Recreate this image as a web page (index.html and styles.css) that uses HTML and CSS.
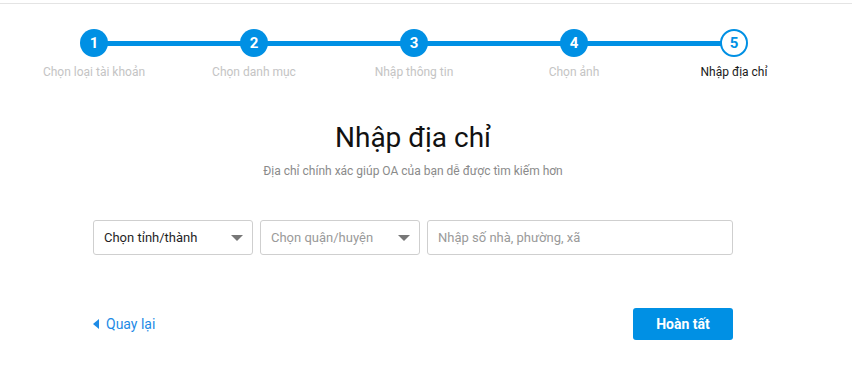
FILE: index.html
```html
<!DOCTYPE html>
<html lang="vi">
<head>
<meta charset="utf-8">
<title>Nhập địa chỉ</title>
<link rel="stylesheet" href="styles.css">
</head>
<body>
<div class="topbar"></div>
<div class="steps">
  <div class="track"></div>
  <div class="step done"><div class="dot">1</div><div class="label">Chọn loại tài khoản</div></div>
  <div class="step done"><div class="dot">2</div><div class="label">Chọn danh mục</div></div>
  <div class="step done"><div class="dot">3</div><div class="label">Nhập thông tin</div></div>
  <div class="step done"><div class="dot">4</div><div class="label">Chọn ảnh</div></div>
  <div class="step active"><div class="dot">5</div><div class="label">Nhập địa chỉ</div></div>
</div>
<main class="content">
  <h1 class="title">Nhập địa chỉ</h1>
  <p class="subtitle">Địa chỉ chính xác giúp OA của bạn dễ được tìm kiếm hơn</p>
  <div class="form-row">
    <div class="select"><span class="val">Chọn tỉnh/thành</span><span class="caret"></span></div>
    <div class="select"><span class="val placeholder">Chọn quận/huyện</span><span class="caret"></span></div>
    <div class="input"><span class="placeholder">Nhập số nhà, phường, xã</span></div>
  </div>
  <div class="footer">
    <a class="back" href="#"><span class="back-arrow"></span>Quay lại</a>
    <button class="btn">Hoàn tất</button>
  </div>
</main>
</body>
</html>
```
FILE: styles.css
```css
* { box-sizing: border-box; }
html, body { margin: 0; padding: 0; background: #fff; }
body { font-family: Roboto, "Noto Sans", Arial, sans-serif; color: #222; }

.topbar { height: 4px; border-bottom: 1px solid #e4e4e4; }

.steps {
  position: relative;
  display: flex;
  width: 800px;
  margin: 25px 0 0 14px;
}
.track {
  position: absolute;
  left: 80px;
  right: 80px;
  top: 12px;
  height: 5px;
  background: #0090e4;
}
.step {
  position: relative;
  width: 160px;
  display: flex;
  flex-direction: column;
  align-items: center;
}
.dot {
  width: 28px;
  height: 28px;
  border-radius: 50%;
  background: #0090e4;
  color: #fff;
  font-weight: 700;
  font-size: 15px;
  display: flex;
  align-items: center;
  justify-content: center;
}
.step.active .dot {
  background: #fff;
  border: 2px solid #0090e4;
  color: #0090e4;
}
.label {
  margin-top: 8px;
  font-size: 12px;
  line-height: 14px;
  color: #c4c4c4;
  white-space: nowrap;
}
.step.active .label { color: #1a1a1a; }

.content { width: 640px; margin-left: 93px; }
.title {
  margin: 44px 0 0;
  text-align: center;
  font-size: 28px;
  line-height: 30px;
  font-weight: 400;
  color: #111;
}
.subtitle {
  margin: 11px 0 0;
  text-align: center;
  font-size: 12px;
  line-height: 14px;
  color: #8a8a8a;
}
.form-row {
  display: flex;
  gap: 7px;
  margin-top: 42px;
}
.select, .input {
  height: 35px;
  border: 1px solid #cfcfcf;
  border-radius: 3px;
  display: flex;
  align-items: center;
  font-size: 13px;
  padding: 0 10px;
}
.select { width: 160px; justify-content: space-between; }
.input { flex: 1; }
.val { color: #1f1f1f; }
.placeholder { color: #9a9a9a; }
.caret {
  width: 0; height: 0;
  border-left: 6px solid transparent;
  border-right: 6px solid transparent;
  border-top: 6px solid #777;
  margin-right: -1px;
}
.footer {
  display: flex;
  justify-content: space-between;
  align-items: center;
  margin-top: 53px;
}
.back {
  display: flex;
  align-items: center;
  color: #1e8be6;
  text-decoration: none;
  font-size: 14px;
}
.back-arrow {
  width: 0; height: 0;
  border-top: 5px solid transparent;
  border-bottom: 5px solid transparent;
  border-right: 6px solid #1e8be6;
  margin-right: 7px;
}
.btn {
  width: 100px;
  height: 32px;
  border: 0;
  border-radius: 3px;
  background: #0090e4;
  color: #fff;
  font-family: Roboto, "Noto Sans", Arial, sans-serif;
  font-weight: 700;
  font-size: 14px;
  cursor: pointer;
}
```
